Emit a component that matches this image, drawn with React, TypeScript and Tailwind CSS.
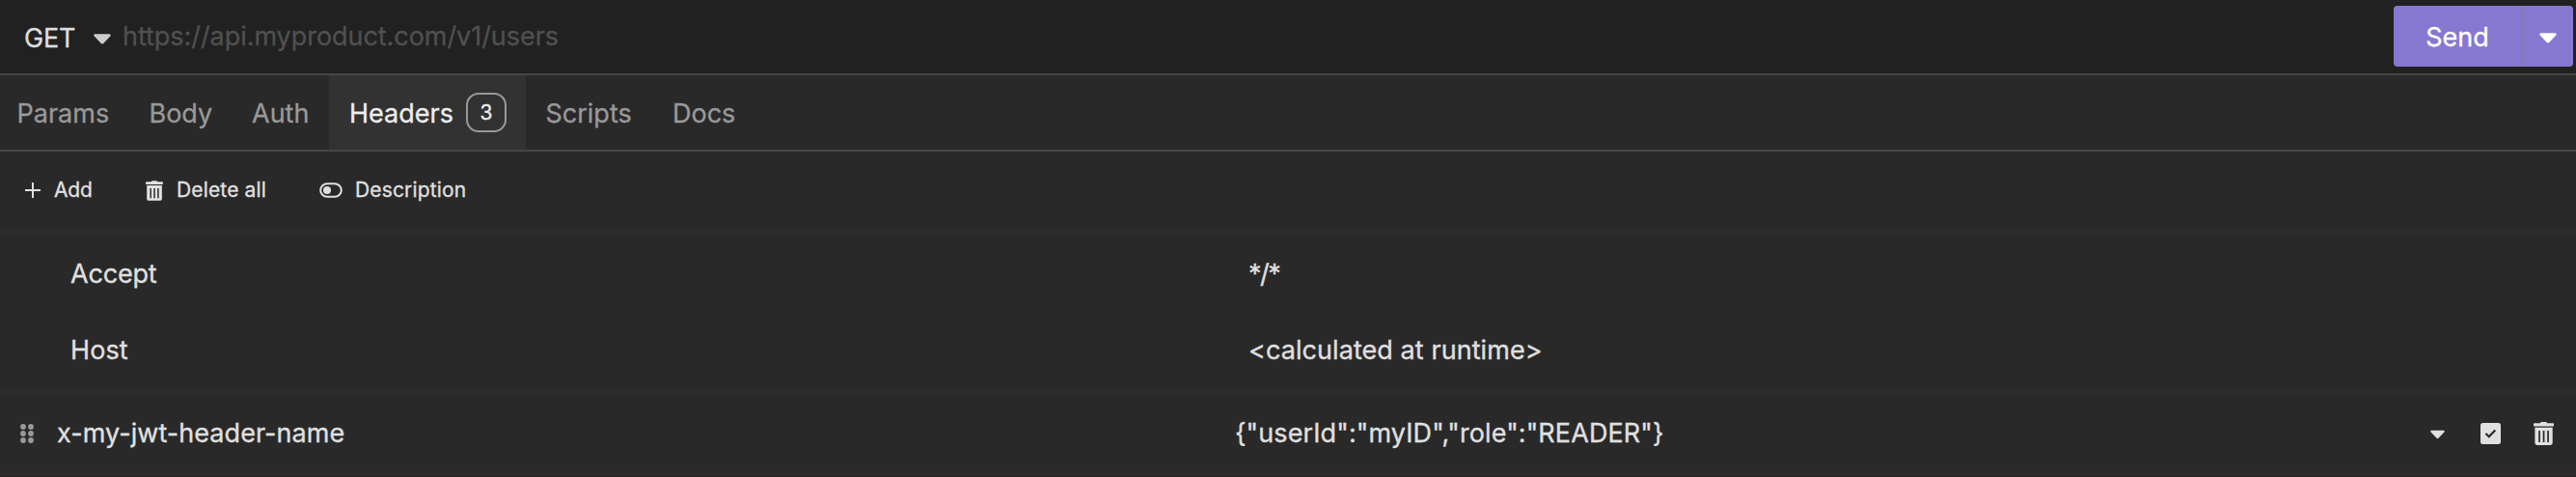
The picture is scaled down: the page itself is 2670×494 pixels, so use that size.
import React from "react";

const font =
  "font-['Inter',sans-serif] font-normal [font-optical-sizing:none] [font-variation-settings:'opsz'_14] [-webkit-text-stroke:0.3px_currentColor]";

function Caret({ className }: { className: string }) {
  return (
    <svg viewBox="0 0 18 11" className={className} fill="currentColor">
      <path d="M1.6 0.3h14.8c1.2 0 1.8 1.4.9 2.3l-6.9 7.2c-.8.9-2 .9-2.8 0L.7 2.6C-.2 1.7.4.3 1.6.3z" />
    </svg>
  );
}

function Trash({ className }: { className: string }) {
  return (
    <svg viewBox="0 0 21 24" className={className} fill="currentColor">
      <path d="M1 1.300h5.600L7.400.4C7.600.1 7.900 0 8.200 0h4.600c.3 0 .6.1.8.4l.8.900H20c.6 0 1 .4 1 1V3.400c0 .6-.4 1-1 1H1c-.6 0-1-.4-1-1V2.300c0-.6.4-1 1-1z" />
      <path
        fillRule="evenodd"
        d="M1.400 5.700h18.300v15.900c0 1.300-1 2.400-2.400 2.400H3.800c-1.400 0-2.400-1.100-2.400-2.400zM5.200 9v12h1.700V9zM9.700 9v12h1.700V9zM14.200 9v12h1.700V9z"
      />
    </svg>
  );
}

function Tab({ label, width, pad }: { label: string; width: string; pad: string }) {
  return (
    <div className={`flex h-full items-center pt-[2px] text-[#999999] ${width} ${pad}`}>
      <span className="whitespace-nowrap">{label}</span>
    </div>
  );
}

export default function App() {
  return (
    <div className={`flex h-[494px] w-[2670px] flex-col overflow-hidden bg-[#292929] text-[27px] leading-8 text-[#e0e0e0] ${font}`}>
      <header className="flex h-[78px] shrink-0 items-center border-b-2 border-[#464646] bg-[#212121]">
        <div className="flex w-[127px] items-center pl-[25px]">
          <span className="w-[72px] pt-[3px] tracking-[-0.2px] text-[#dedede]">GET</span>
          <Caret className="mt-[4px] h-[11px] w-[18px] text-[#cccccc]" />
        </div>
        <span className="grow whitespace-nowrap tracking-[-0.050px] text-[#505050]">https://api.myproduct.com/v1/users</span>
        <div className="mb-px mr-[3px] flex h-[63px] w-[186px] overflow-hidden rounded-[4px] bg-[#8678d0] text-white">
          <button className="w-[134px] border-r-2 border-[#8379b4] pt-[2px]">Send</button>
          <button className="flex grow items-center justify-center">
            <Caret className="mt-[3px] h-[11px] w-[18px]" />
          </button>
        </div>
      </header>

      <nav className="flex h-[79px] shrink-0 items-center border-b-2 border-[#464646]">
        <Tab label="Params" width="w-[137px]" pad="pl-[17.500px]" />
        <Tab label="Body" width="w-[106px]" pad="pl-[17.500px]" />
        <Tab label="Auth" width="w-[98px]" pad="pl-[18px]" />
        <div className="flex h-full w-[204px] items-center bg-[#323232] pl-[21px] text-[#eeeeee]">
          <span className="w-[121px] pt-[2px]">Headers</span>
          <span className="flex h-[41px] w-[42px] items-center justify-center rounded-[13px] border-2 border-[#999999] text-[21px]">3</span>
        </div>
        <Tab label="Scripts" width="w-[132px]" pad="pl-[20.500px]" />
        <Tab label="Docs" width="w-[104px]" pad="pl-[20px]" />
      </nav>

      <div className="flex h-[80px] shrink-0 items-center text-[21px] tracking-[0.150px]">
        <div className="flex w-[151px] items-center pl-[26px]">
          <svg viewBox="0 0 16 16" className="h-4 w-4" stroke="currentColor" strokeWidth="2" strokeLinecap="round">
            <path d="M8 0.500v15M0.500 8h15" />
          </svg>
          <span className="pl-[14px] tracking-[-0.2px]">Add</span>
        </div>
        <div className="flex w-[180px] items-center">
          <Trash className="h-[21px] w-[18px]" />
          <span className="pl-[14px]">Delete all</span>
        </div>
        <div className="flex items-center">
          <svg viewBox="0 0 24 16" className="h-4 w-6" fill="none">
            <rect x="1.200" y="1.200" width="21.600" height="13.600" rx="6.800" stroke="currentColor" strokeWidth="2" />
            <circle cx="8" cy="8" r="4" fill="currentColor" />
          </svg>
          <span className="pl-[13px]">Description</span>
        </div>
      </div>

      <div className="h-[6px] shrink-0 bg-[#2c2c2c]" />
      <div className="flex h-[80px] shrink-0 items-center pl-[73px] pt-px">
        <span className="w-[1221px] tracking-[-0.200px]">Accept</span>
        <span className="tracking-[-1.500px]">*/*</span>
      </div>
      <div className="flex h-[79px] shrink-0 items-center pl-[73px]">
        <span className="w-[1221px] tracking-[0.1px]">Host</span>
        <span className="tracking-[0.070px]">&lt;calculated at runtime&gt;</span>
      </div>
      <div className="h-[7px] shrink-0 bg-[#2c2c2c]" />
      <div className="flex h-[79px] shrink-0 items-center pl-[21px]">
        <svg viewBox="0 0 14 20" className="h-5 w-[14px] text-[#999999]" fill="currentColor">
          <circle cx="3" cy="3" r="2.900" />
          <circle cx="11" cy="3" r="2.900" />
          <circle cx="3" cy="10" r="2.900" />
          <circle cx="11" cy="10" r="2.900" />
          <circle cx="3" cy="17" r="2.900" />
          <circle cx="11" cy="17" r="2.900" />
        </svg>
        <span className="w-[1245px] pl-[24px] tracking-[0.060px]">x-my-jwt-header-name</span>
        <span className="grow tracking-[0.100px]">{'{"userId":"myID","role":"READER"}'}</span>
        <Caret className="mr-[37px] mt-[2px] h-[10px] w-[15px]" />
        <svg viewBox="0 0 21 22" className="mr-[34px] h-[22px] w-[21px]">
          <rect width="21" height="22" rx="2.500" fill="currentColor" />
          <path d="M5.500 11l3.300 3.200 6.500-6.700" fill="none" stroke="#292929" strokeWidth="2.200" />
        </svg>
        <Trash className="mr-[23px] h-[24px] w-[21px]" />
      </div>
      <div className="h-[5px] shrink-0 bg-[#2c2c2c]" />
      <div className="h-px shrink-0 bg-[#292427]" />
    </div>
  );
}
